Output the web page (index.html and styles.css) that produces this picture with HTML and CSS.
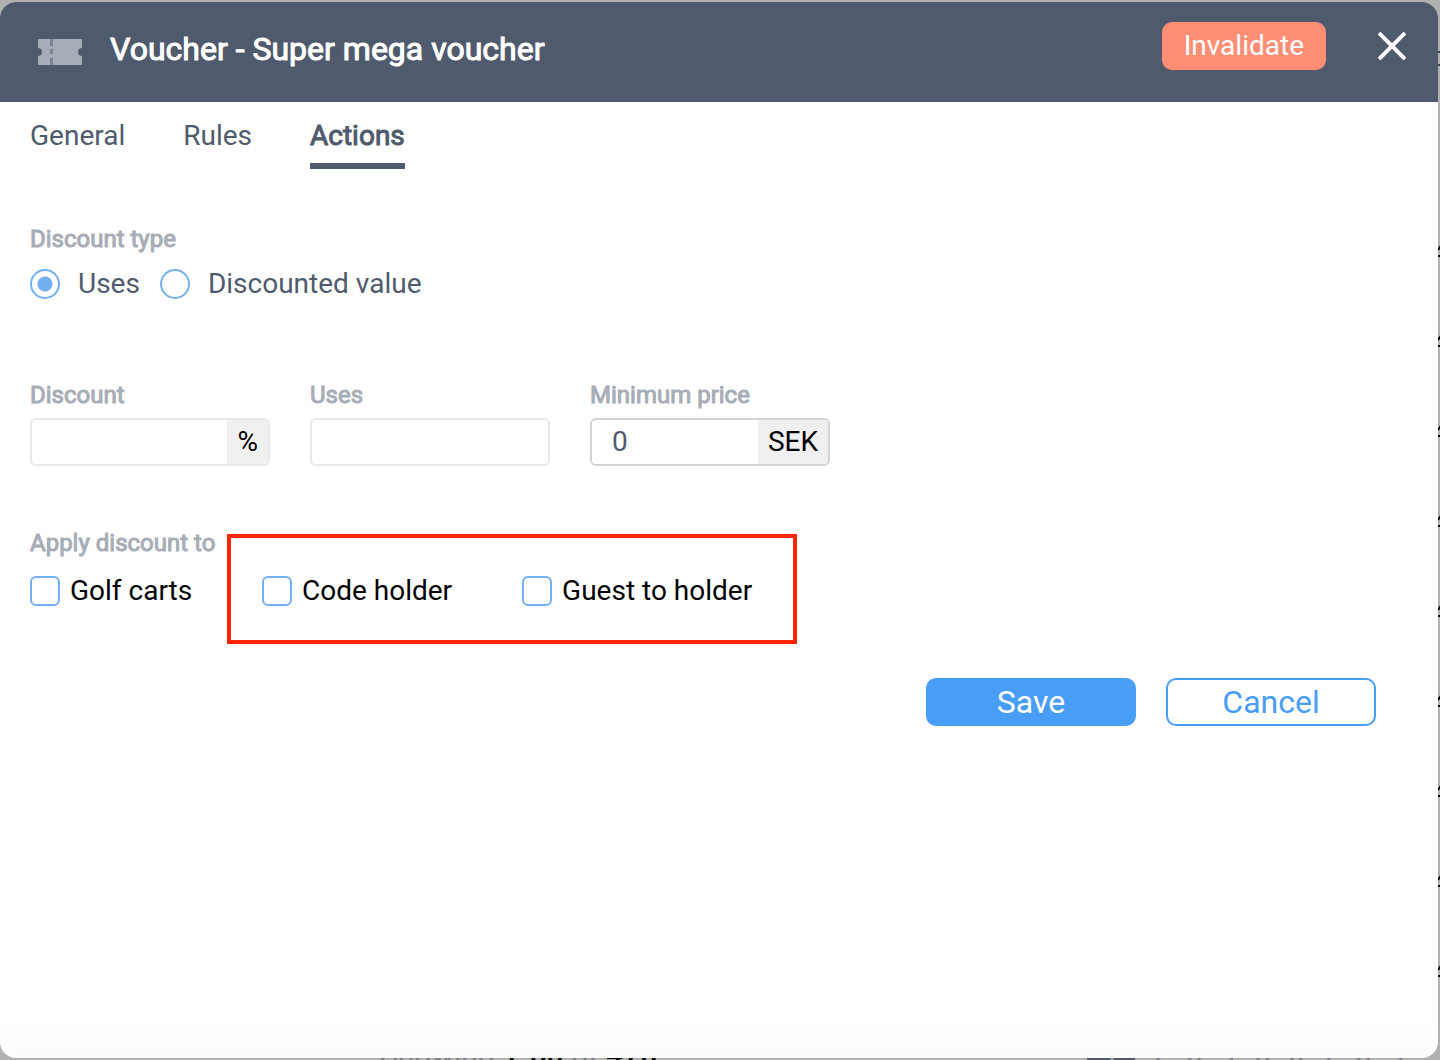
FILE: index.html
```html
<!doctype html>
<html lang="en">
<head>
	<meta charset="utf-8">
	<title>Voucher</title>
	<link rel="stylesheet" href="styles.css">
</head>
<body>
	<div class="page" aria-hidden="true">
		<div class="row-icons">
			<svg class="menu-icon" viewBox="0 0 30 30"><path d="M0 8h30M0 21h30"/></svg>
			<svg viewBox="0 0 30 30"><path d="M0 14L6 5M0 20h30"/></svg>
			<svg viewBox="0 0 30 30"><path d="M0 14L6 5M0 20h30"/></svg>
			<svg viewBox="0 0 30 30"><path d="M0 14L6 5M0 20h30"/></svg>
			<svg viewBox="0 0 30 30"><path d="M0 14L6 5M0 20h30"/></svg>
			<svg viewBox="0 0 30 30"><path d="M0 14L6 5M0 20h30"/></svg>
			<svg viewBox="0 0 30 30"><path d="M0 14L6 5M0 20h30"/></svg>
			<svg viewBox="0 0 30 30"><path d="M0 14L6 5M0 20h30"/></svg>
			<svg viewBox="0 0 30 30"><path d="M0 14L6 5M0 20h30"/></svg>
			<svg viewBox="0 0 30 30"><path d="M0 14L6 5M0 20h30"/></svg>
		</div>
		<div class="page-footer">
			<span>Showing <b>1-50</b> of <b>476</b></span>
			<div class="pager">
				<span class="current">1</span><span>2</span><span>3</span><span>4</span><span>5</span><span>6</span><span>7</span><span>8</span><span>9</span>
			</div>
		</div>
	</div>

	<div class="modal" role="dialog" aria-labelledby="title">
		<div class="modal-header">
			<svg class="ticket" viewBox="0 0 44 60">
				<path d="M1 17H12V24H15V17H43Q44 17 44 18V26A4 4 0 0 0 44 34V42Q44 43 43 43H15V36H12V43H1Q0 43 0 42V34A4 4 0 0 0 0 26V18Q0 17 1 17Z"/>
				<path class="cut" d="M12 17h3v7h-3zM12 27h3v5h-3zM12 36h3v7h-3z"/>
			</svg>
			<h1 id="title">Voucher - Super mega voucher</h1>
			<button class="btn-invalidate" type="button">Invalidate</button>
			<button class="btn-close" type="button" aria-label="Close">
				<svg viewBox="0 0 28 28"><path d="M1 1L27 27M27 1L1 27"/></svg>
			</button>
		</div>
		<div class="tabs">
			<a href="#general">General</a>
			<a href="#rules">Rules</a>
			<a class="active" href="#actions">Actions</a>
		</div>
		<form class="content">
			<fieldset class="discount-type">
				<legend>Discount type</legend>
				<div class="radios">
					<label><input type="radio" name="type" checked>Uses</label>
					<label><input type="radio" name="type">Discounted value</label>
				</div>
			</fieldset>
			<div class="fields">
				<div class="field">
					<label for="discount">Discount</label>
					<div class="box">
						<input type="text" id="discount">
						<span class="unit">%</span>
					</div>
				</div>
				<div class="field">
					<label for="uses">Uses</label>
					<div class="box">
						<input type="text" id="uses">
					</div>
				</div>
				<div class="field">
					<label for="price">Minimum price</label>
					<div class="box filled">
						<input type="text" id="price" value="0">
						<span class="unit">SEK</span>
					</div>
				</div>
			</div>
			<div class="apply">
				<fieldset class="apply-golf">
					<legend>Apply discount to</legend>
					<label class="check"><input type="checkbox">Golf carts</label>
				</fieldset>
				<div class="highlight">
					<label class="check"><input type="checkbox">Code holder</label>
					<label class="check"><input type="checkbox">Guest to holder</label>
				</div>
			</div>
			<div class="buttons">
				<button class="btn-save" type="button">Save</button>
				<button class="btn-cancel" type="button">Cancel</button>
			</div>
		</form>
	</div>
</body>
</html>
```
FILE: styles.css
```css
*
{
	box-sizing:border-box;
}
body
{
	margin:0;
	height:100vh;
	overflow:hidden;
	background-color:#b0b0b0;
	font-family:Roboto, sans-serif;
	font-size:28px;
	line-height:32px;
	color:#4f5b6d;
}
button, input
{
	font:inherit;
	color:inherit;
}
fieldset
{
	margin:0;
	padding:0;
	border:0;
}
/* list page behind the dialog */
.page
{
	display:flex;
	flex-direction:column;
	justify-content:space-between;
	height:calc(100vh + 10px);
}
.row-icons
{
	display:flex;
	flex-direction:column;
	align-items:flex-end;
	gap:60px;
	padding-top:44px;
	margin-right:-28px;
}
.row-icons svg
{
	width:30px;
	height:30px;
	fill:none;
	stroke:#000;
	stroke-width:2;
}
.row-icons .menu-icon
{
	margin-bottom:102px;
	stroke:#3b4452;
}
.page-footer
{
	display:flex;
	justify-content:space-between;
	padding:0 35px 0 380px;
	font-size:30px;
	color:#777a80;
}
.page-footer b
{
	font-weight:500;
	color:#000;
}
.pager
{
	display:flex;
	gap:18px;
	font-size:28px;
}
.pager .current
{
	width:48px;
	text-align:center;
	background-color:#4f5b6d;
	color:#b0b0b0;
}
.modal
{
	position:fixed;
	top:2px;
	right:2px;
	bottom:2px;
	left:0;
	overflow:hidden;
	border-radius:16px;
	background:linear-gradient(#fff 96%, #fcfcfc);
}
.modal-header
{
	display:flex;
	align-items:flex-start;
	padding:20px 32px 20px 38px;
	background-color:#4f5b6d;
	color:#fff;
}
.ticket
{
	width:44px;
	height:60px;
	fill:#a7adb6;
}
.ticket .cut
{
	fill:#7b8491;
}
h1
{
	flex:1;
	margin:0 0 0 28px;
	font-size:32px;
	line-height:54px;
	font-weight:400;
	-webkit-text-stroke:1px;
}
.btn-invalidate
{
	height:48px;
	padding:0 22px;
	border:0;
	border-radius:10px;
	background-color:#ff8e75;
}
.btn-close
{
	display:flex;
	align-items:center;
	height:48px;
	margin-left:52px;
	padding:0;
	border:0;
	background:none;
}
.btn-close svg
{
	width:28px;
	height:28px;
	stroke:#fff;
	stroke-width:4;
}
.tabs
{
	display:flex;
	gap:58px;
	padding:18px 30px 0;
}
.tabs a
{
	padding-bottom:11px;
	color:#4f5b6d;
	text-decoration:none;
}
.tabs .active
{
	border-bottom:6px solid #4f5b6d;
	-webkit-text-stroke:1px;
}
.content
{
	padding:54px 30px 0;
}
legend, .field label
{
	display:block;
	padding:0;
	font-size:24px;
	color:#a7adb6;
	-webkit-text-stroke:1px;
}
.radios
{
	display:flex;
	gap:20px;
	padding-top:13px;
}
.radios label
{
	display:flex;
	align-items:center;
	gap:18px;
}
input[type=radio], input[type=checkbox]
{
	appearance:none;
	width:30px;
	height:30px;
	margin:0;
	border:2px solid #74b0f1;
	border-radius:50%;
	background-color:#fff;
}
input[type=radio]:checked
{
	background-image:radial-gradient(circle, #74b0f1 7px, transparent 8px);
}
input[type=checkbox]
{
	border-radius:6px;
}
.fields
{
	display:flex;
	gap:40px;
	margin-top:79px;
}
.field
{
	width:240px;
}
.box
{
	display:flex;
	height:48px;
	margin-top:7px;
	border:2px solid #e8e8e8;
	border-radius:6px;
	overflow:hidden;
}
.box.filled
{
	border-color:#d1d3d9;
}
.box input
{
	flex:1;
	min-width:0;
	padding:0 20px;
	border:0;
	outline:0;
}
.unit
{
	padding:0 10px;
	line-height:44px;
	background-color:#f0f0f0;
	color:#000;
}
.apply
{
	display:flex;
	align-items:flex-start;
	margin-top:61px;
}
.apply-golf
{
	width:197px;
}
.check
{
	display:flex;
	align-items:center;
	gap:10px;
	color:#000;
}
.apply-golf .check
{
	margin-top:16px;
}
.highlight
{
	display:flex;
	gap:70px;
	margin-top:7px;
	padding:37px 41px 33px 31px;
	border:4px solid #ff2600;
}
.buttons
{
	display:flex;
	justify-content:flex-end;
	gap:30px;
	padding:34px 32px 0 0;
}
.buttons button
{
	width:210px;
	height:48px;
	padding:0;
	border:2px solid #489df6;
	border-radius:10px;
	font-size:32px;
	line-height:40px;
}
.btn-save
{
	background-color:#489df6;
	color:#fff;
}
.btn-cancel
{
	background-color:#fff;
	color:#489df6;
}
```
